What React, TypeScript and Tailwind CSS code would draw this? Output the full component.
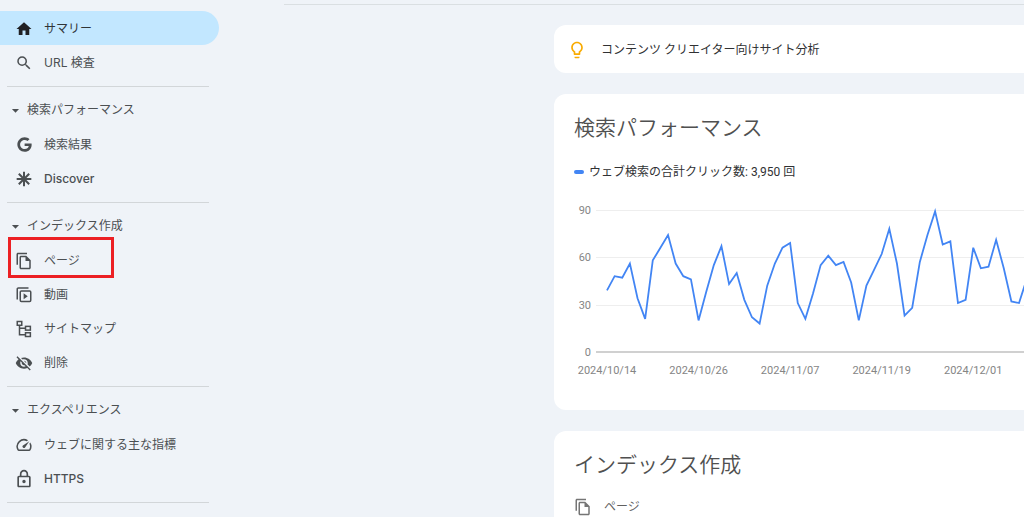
import type { ReactNode } from "react";
import {
  MdArrowDropDown,
  MdHome,
  MdOutlineFileCopy,
  MdOutlineLightbulb,
  MdOutlineLock,
  MdSearch,
  MdSpeed,
  MdVisibilityOff,
} from "react-icons/md";
import { FaGoogle } from "react-icons/fa";

interface NavItem {
  label: string;
  icon: ReactNode;
  active?: boolean;
  highlighted?: boolean;
  latin?: boolean;
}

interface NavSection {
  title: string;
  items: NavItem[];
}

function DiscoverIcon() {
  return (
    <svg viewBox="0 0 24 24" className="size-4" stroke="currentColor" strokeWidth="3" aria-hidden="true">
      <path d="M12 1v22M1 12h22M4.2 4.2l15.6 15.6M19.8 4.2L4.2 19.8" />
    </svg>
  );
}

function VideoPagesIcon() {
  return (
    <svg viewBox="0 0 24 24" className="size-[18px]" fill="none" stroke="currentColor" strokeWidth="2" aria-hidden="true">
      <path d="M3 18V4a1.500 1.500 0 0 1 1.500-1.500H18" />
      <rect x="7" y="6.500" width="14" height="14" rx="1.500" />
      <path d="M11.500 9.500v8l5.500-4z" fill="currentColor" stroke="none" />
    </svg>
  );
}

function SitemapIcon() {
  return (
    <svg viewBox="0 0 24 24" className="size-[18px]" fill="none" stroke="currentColor" strokeWidth="2" aria-hidden="true">
      <rect x="3" y="2" width="6" height="5" />
      <rect x="14" y="8.500" width="6.500" height="5" />
      <rect x="14" y="17" width="6.500" height="5" />
      <path d="M6 7v12.500h8M6 11h8" />
    </svg>
  );
}

const topItems: NavItem[] = [
  { label: "サマリー", icon: <MdHome className="size-[18px] text-[#202124]" />, active: true },
  { label: "URL 検査", icon: <MdSearch className="size-[18px]" /> },
];

const sections: NavSection[] = [
  {
    title: "検索パフォーマンス",
    items: [
      { label: "検索結果", icon: <FaGoogle className="size-[15px]" /> },
      { label: "Discover", icon: <DiscoverIcon />, latin: true },
    ],
  },
  {
    title: "インデックス作成",
    items: [
      { label: "ページ", icon: <MdOutlineFileCopy className="size-[18px]" />, highlighted: true },
      { label: "動画", icon: <VideoPagesIcon /> },
      { label: "サイトマップ", icon: <SitemapIcon /> },
      { label: "削除", icon: <MdVisibilityOff className="size-[18px]" /> },
    ],
  },
  {
    title: "エクスペリエンス",
    items: [
      { label: "ウェブに関する主な指標", icon: <MdSpeed className="size-[18px]" /> },
      { label: "HTTPS", icon: <MdOutlineLock className="size-5 shrink-0" />, latin: true },
    ],
  },
];

function NavLink({ item }: { item: NavItem }) {
  return (
    <a
      href="#"
      className={`relative flex h-[34px] items-center gap-[11px] rounded-r-full pt-px pl-[15px] ${
        item.active ? "bg-[#c2e7ff] text-[#303437]" : "text-[#4b4f52]"
      }`}
    >
      <span className="flex w-[18px] justify-center">{item.icon}</span>
      <span className={item.latin ? "font-medium" : ""}>{item.label}</span>
      {item.highlighted && (
        <span className="pointer-events-none absolute -top-1.5 left-2 h-[41px] w-[106px] border-3 border-[#ec2024]" />
      )}
    </a>
  );
}

function Sidebar() {
  return (
    <nav className="w-[219px] shrink-0 pt-[11px] font-['Inter','Noto_Sans_CJK_JP',sans-serif] text-xs">
      {topItems.map((item) => (
        <NavLink key={item.label} item={item} />
      ))}
      {sections.map((section) => (
        <section key={section.title} className="pt-[7px]">
          <hr className="mr-2.5 ml-[7px] border-[#d2d6d9]" />
          <button
            type="button"
            className="mt-[5px] flex h-[35px] items-center gap-[3px] pt-px pl-[7px] text-[#4b4f52]"
          >
            <MdArrowDropDown className="size-[17px]" />
            {section.title}
          </button>
          {section.items.map((item) => (
            <NavLink key={item.label} item={item} />
          ))}
        </section>
      ))}
      <hr className="mt-[7px] mr-2.5 ml-[7px] border-[#d2d6d9]" />
    </nav>
  );
}

// Daily clicks, starting 2024/10/14
const clicks = [
  39, 48, 47, 56, 34, 21, 58, 66, 74, 56, 48, 46, 20, 38, 55, 67, 43, 50, 33, 22, 18, 42, 56, 66, 69, 31, 21, 37, 55,
  61, 55, 57, 44, 20, 42, 52, 62, 78, 56, 23, 28, 57, 74, 89, 68, 70, 31, 33, 66, 53, 54, 71, 53, 32, 31, 46,
];
const dateLabels = ["2024/10/14", "2024/10/26", "2024/11/07", "2024/11/19", "2024/12/01"];
const gridValues = [90, 60, 30, 0];

const dayWidth = 7.63;
const originX = 33;
const baseY = 152;
const unitHeight = 1.58;

function ClicksChart() {
  const points = clicks.map((value, i) => `${originX + i * dayWidth},${baseY - value * unitHeight}`).join(" ");

  return (
    <svg width="600" height="190" className="block max-w-none font-['Roboto',sans-serif] text-[11px]" role="img" aria-label="ウェブ検索の合計クリック数">
      {gridValues.map((value) => {
        const y = Math.round(baseY - value * unitHeight);
        return (
          <g key={value}>
            <rect x="22" y={value === 0 ? y - 1 : y} width="578" height={value === 0 ? 2 : 1} fill={value === 0 ? "#d0d0d0" : "#eeeeee"} />
            <text x="17" y={y + 4} textAnchor="end" fill="#858585">
              {value}
            </text>
          </g>
        );
      })}
      <polyline points={points} fill="none" stroke="#4285f4" strokeWidth="1.8" />
      {dateLabels.map((label, i) => (
        <text key={label} x={originX + i * 12 * dayWidth} y={baseY + 22} textAnchor="middle" fill="#858585">
          {label}
        </text>
      ))}
    </svg>
  );
}

export default function App() {
  return (
    <div className="flex h-screen overflow-hidden bg-[#eff3f8] font-['Roboto','Noto_Sans_CJK_JP',sans-serif]">
      <Sidebar />
      <main className="ml-[65px] min-w-0 flex-1 pt-1">
        <hr className="border-[#dadfe2]" />
        <div className="mt-5 ml-[270px] flex flex-col gap-[21px]">
          <a href="#" className="flex h-12 items-center gap-3.5 rounded-l-xl bg-white pt-px pl-[13px] text-xs text-[#303133]">
            <MdOutlineLightbulb className="size-5 text-[#f9ab00]" />
            コンテンツ クリエイター向けサイト分析
          </a>

          <section className="h-[316px] overflow-hidden rounded-l-xl bg-white pt-5 pl-5">
            <h2 className="text-[21px] leading-7 font-[350] text-[#505050]">検索パフォーマンス</h2>
            <div className="mt-5 flex h-5 items-center gap-[5px] text-xs text-[#303133]">
              <span className="h-1 w-2.5 rounded-xs bg-[#4285f4]" />
              ウェブ検索の合計クリック数: 3,950 回
            </div>
            <div className="mt-[18px]">
              <ClicksChart />
            </div>
          </section>

          <section className="rounded-l-xl bg-white pt-5 pb-10 pl-5">
            <h2 className="text-[21px] leading-7 font-[350] text-[#505050]">インデックス作成</h2>
            <a href="#" className="mt-[18px] flex h-5 items-center gap-3 text-xs text-[#606060]">
              <MdOutlineFileCopy className="size-[18px] text-[#757575]" />
              ページ
            </a>
          </section>
        </div>
      </main>
    </div>
  );
}
